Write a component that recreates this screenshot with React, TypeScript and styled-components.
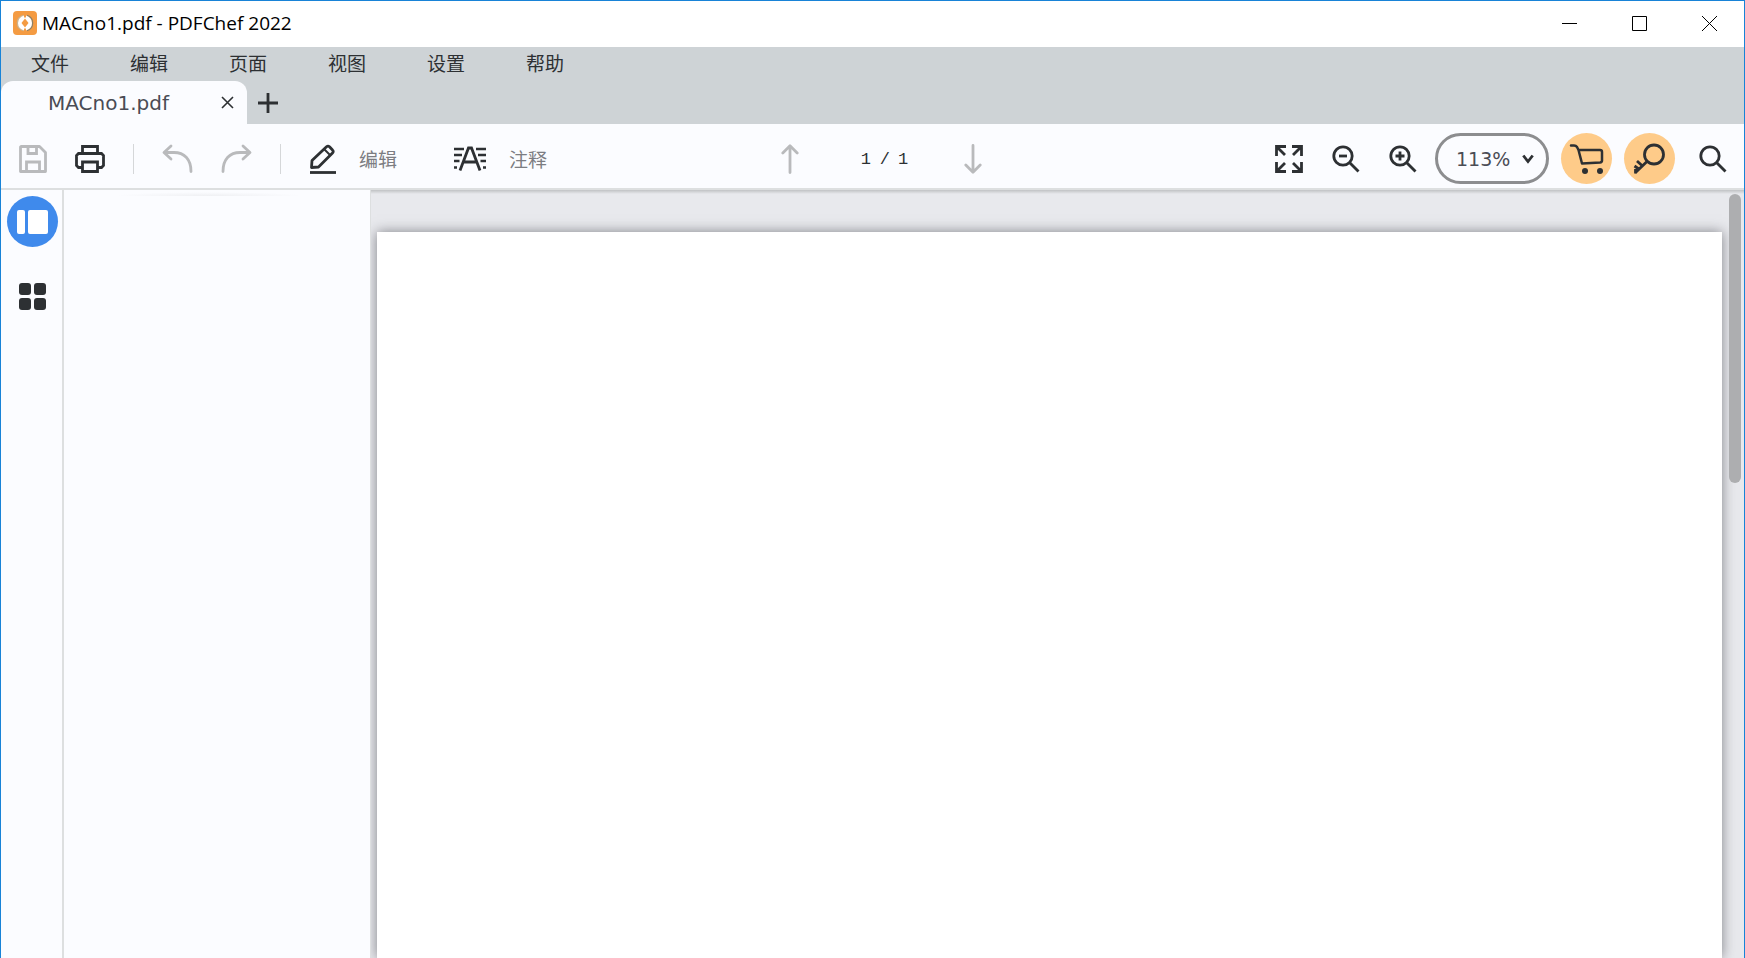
import React from "react";
import styled, { createGlobalStyle } from "styled-components";

const colors = {
  frame: "#1883d7",
  chrome: "#ced3d6",
  surface: "#fbfcff",
  canvas: "#e8e9ed",
  ink: "#2d3033",
  muted: "#b9babc",
  line: "#dddfe0",
};

const cjk = `"Noto Sans CJK SC", sans-serif`;

const GlobalStyle = createGlobalStyle`
  *, *::before, *::after { box-sizing: border-box; }
  body { margin: 0; background: #ffffff; }
  button, input, select { font: inherit; color: inherit; }
`;

const AppWindow = styled.div`
  display: flex;
  flex-direction: column;
  height: 100vh;
  border: 1px solid ${colors.frame};
  border-bottom: 0;
  overflow: hidden;
  font-family: "DejaVu Sans", ${cjk};
  font-size: 19px;
  color: ${colors.ink};
`;

const PlainButton = styled.button`
  display: flex;
  align-items: center;
  justify-content: center;
  flex: none;
  margin: 0;
  padding: 0;
  border: 0;
  background: none;
  cursor: pointer;
`;

/* Title bar */

const TitleBar = styled.header`
  display: flex;
  align-items: center;
  flex: none;
  height: 46px;
  padding: 0 0 2px 12px;
  background: #ffffff;
`;

const Title = styled.h1`
  flex: 1;
  margin: 0 0 0 5px;
  font: 400 19px/24px "Open Sans", ${cjk};
  color: #000000;
`;

const WindowButton = styled(PlainButton)`
  width: 70px;
  height: 44px;
  color: #000000;
`;

/* Menu and tabs */

const Chrome = styled.div`
  flex: none;
  background: ${colors.chrome};
`;

const MenuBar = styled.nav`
  display: flex;
  gap: 61px;
  height: 34px;
  padding: 0 0 2px 30px;
`;

const MenuItem = styled(PlainButton)`
  font: 400 19px/24px ${cjk};
`;

const TabStrip = styled.div`
  display: flex;
  height: 43px;
`;

const Tab = styled.div`
  display: flex;
  align-items: center;
  justify-content: space-between;
  width: 246px;
  padding: 0 10px 0 47px;
  border-radius: 12px 12px 0 0;
  background: ${colors.surface};
`;

const TabLabel = styled(PlainButton)`
  font-size: 20px;
  line-height: 24px;
  color: #4a4c55;
`;

const SmallButton = styled(PlainButton)`
  width: 20px;
  height: 43px;
`;

const AddTabButton = styled(SmallButton)`
  margin-left: 11px;
`;

/* Toolbar */

const Toolbar = styled.div`
  display: grid;
  grid-template-columns: 1fr auto 1fr;
  align-items: center;
  flex: none;
  padding: 9px 0 4px 18px;
  border-bottom: 2px solid ${colors.line};
  background: ${colors.surface};
`;

const Group = styled.div<{ $gap?: number }>`
  display: flex;
  align-items: center;
  gap: ${({ $gap = 0 }) => $gap}px;
`;

const ActionGroup = styled(Group)`
  justify-content: flex-end;
  padding-right: 17px;
`;

const IconButton = styled(PlainButton)<{ $muted?: boolean }>`
  height: 30px;
  color: ${({ $muted }) => ($muted ? colors.muted : colors.ink)};
`;

const SearchButton = styled(IconButton)`
  margin-left: 12px;
`;

const ToolButton = styled(PlainButton)`
  gap: 22px;
  font: 400 19px/24px ${cjk};
  color: ${colors.ink};

  & + & {
    margin-left: 28px;
  }
`;

const ToolLabel = styled.span`
  color: #7c7d82;
`;

const Divider = styled.span`
  width: 1px;
  height: 30px;
  background: #d5d7d9;
`;

const PageCounter = styled.div`
  display: flex;
  align-items: center;
  justify-content: center;
  gap: 8px;
  width: 165px;
  padding: 2px 0 0 6px;
  font: 400 17px/24px "Liberation Mono", monospace;
`;

const PageInput = styled.input`
  width: 11px;
  padding: 0;
  border: 0;
  background: none;
  outline: 0;
`;

const ZoomPicker = styled.label`
  position: relative;
  display: flex;
  align-items: center;
  width: 114px;
  height: 51px;
  margin-left: 6px;

  svg {
    position: absolute;
    right: 15px;
    pointer-events: none;
  }
`;

const ZoomSelect = styled.select`
  width: 100%;
  height: 100%;
  padding: 0 0 0 18px;
  border: 3px solid #8c8d8f;
  border-radius: 26px;
  appearance: none;
  background: none;
  color: #4a4c55;
`;

const RoundButton = styled(PlainButton)<{ $color: string }>`
  width: 51px;
  height: 51px;
  border-radius: 50%;
  background: ${({ $color }) => $color};
  color: ${colors.ink};
`;

/* Work area */

const Workspace = styled.div`
  display: flex;
  flex: 1;
  min-height: 0;
`;

const SideRail = styled.aside`
  display: flex;
  flex-direction: column;
  align-items: center;
  gap: 36px;
  flex: none;
  width: 63px;
  padding: 6px 0 0 1px;
  border-right: 2px solid ${colors.line};
  background: ${colors.surface};
`;

const Thumbnails = styled.aside`
  flex: none;
  width: 307px;
  border-right: 1px solid ${colors.line};
  background: ${colors.surface};
`;

const ScrollHint = styled.div`
  width: 190px;
  height: 4px;
  margin: 2px auto 0 50px;
  background: radial-gradient(ellipse at bottom, #eff0f3, ${colors.surface} 70%);
`;

const Canvas = styled.main`
  display: flex;
  flex: 1;
  min-width: 0;
  padding-left: 6px;
  background: linear-gradient(#c0c2c4, ${colors.canvas} 4px);
  overflow: hidden;
`;

const Page = styled.article`
  flex: 1;
  margin-top: 42px;
  background: #ffffff;
  box-shadow: 0 0 12px rgba(60, 62, 68, 0.6);
`;

const ScrollTrack = styled.div`
  flex: none;
  width: 22px;
  padding: 4px 3px 4px 7px;
`;

const ScrollThumb = styled.div`
  position: relative;
  height: 38%;
  border-radius: 6px;
  background: #adaeb0;
`;

type IconProps = {
  w: number;
  h: number;
  stroke?: number;
  round?: boolean;
  children: React.ReactNode;
};

const Icon = ({ w, h, stroke = 2.8, round, children }: IconProps) => (
  <svg
    width={w}
    height={h}
    viewBox={`0 0 ${w} ${h}`}
    fill="none"
    stroke="currentColor"
    strokeWidth={stroke}
    strokeLinecap={round ? "round" : "butt"}
    strokeLinejoin={round ? "round" : "miter"}
    aria-hidden="true"
  >
    {children}
  </svg>
);

const Logo = () => (
  <svg width="24" height="24" viewBox="0 0 24 24" aria-hidden="true">
    <rect width="24" height="24" rx="4" fill="#f49b42" />
    <path d="M10.500 4.500Q4.500 6 4.500 12T10.500 19.500" fill="none" stroke="#c9b391" strokeWidth="1.500" />
    <path d="M14 4.500Q19.500 6 19.500 12T14 19.500" fill="none" stroke="#8d8067" strokeWidth="1.500" />
    <path d="M11 4.500Q5 6.500 5 12T11 19.500L14 17 9.500 12 14 7Z" fill="#fff" />
    <path d="M13 4.500Q19 6.500 19 12T13 19.500L10 17 14.500 12 10 7Z" fill="#fff" />
    <path d="M12 7.500 15.500 12 12 16.500 8.500 12Z" fill="#f49b42" />
    <path d="M12 3V6.500M12 17.500V21" stroke="#f49b42" strokeWidth="2" />
  </svg>
);

const Magnifier = ({ children }: { children?: React.ReactNode }) => (
  <Icon w={28} h={28}>
    <circle cx="11" cy="11" r="9.200" />
    <path d="M17.500 17.500 26.500 26.500" />
    {children}
  </Icon>
);

const menus = ["文件", "编辑", "页面", "视图", "设置", "帮助"];

export default function App() {
  return (
    <>
      <GlobalStyle />
      <AppWindow>
        <TitleBar>
          <Logo />
          <Title>MACno1.pdf - PDFChef 2022</Title>
          <WindowButton aria-label="最小化">
            <Icon w={15} h={15} stroke={1}><path d="M0 7.500H15" /></Icon>
          </WindowButton>
          <WindowButton aria-label="最大化">
            <Icon w={15} h={15} stroke={1}><path d="M.5.5H14.500V14.500H.5Z" /></Icon>
          </WindowButton>
          <WindowButton aria-label="关闭">
            <Icon w={15} h={15} stroke={1}><path d="M0 0 15 15M15 0 0 15" /></Icon>
          </WindowButton>
        </TitleBar>

        <Chrome>
          <MenuBar>
            {menus.map((name) => (
              <MenuItem key={name}>{name}</MenuItem>
            ))}
          </MenuBar>
          <TabStrip>
            <Tab>
              <TabLabel>MACno1.pdf</TabLabel>
              <SmallButton aria-label="关闭标签页">
                <Icon w={13} h={13} stroke={1.6}><path d="M1 1 12 12M12 1 1 12" /></Icon>
              </SmallButton>
            </Tab>
            <AddTabButton aria-label="新建标签页">
              <Icon w={20} h={20}><path d="M0 10H20M10 0V20" /></Icon>
            </AddTabButton>
          </TabStrip>
        </Chrome>

        <Toolbar>
          <Group $gap={28}>
            <IconButton $muted aria-label="保存">
              <Icon w={28} h={28}>
                <path d="M2 1.500H20.500L26.500 7.500V26.500H1.500V2Z" strokeLinejoin="round" />
                <path d="M9 2V8.500H17.500V2M7.500 26V17H20.500V26" />
              </Icon>
            </IconButton>
            <IconButton aria-label="打印">
              <Icon w={30} h={28}>
                <path d="M7.500 8V1.500H22.500V8" />
                <path d="M7 22.500H3.500L1.500 20.500V10.500L3.500 8.500H26.500L28.500 10.500V20.500L26.500 22.500H23" />
                <path d="M7.500 17H22.500V26.500H7.500Z" />
              </Icon>
            </IconButton>
            <Divider />
            <IconButton $muted aria-label="撤销">
              <Icon w={31} h={29} round>
                <path d="M9 2 2 8.500 9 15M2.500 8.500H12C22 8.500 29 15 29 27.500" />
              </Icon>
            </IconButton>
            <IconButton $muted aria-label="重做">
              <Icon w={31} h={29} round>
                <path d="M22 2 29 8.500 22 15M28.500 8.500H19C9 8.500 2 15 2 27.500" />
              </Icon>
            </IconButton>
            <Divider />
            <ToolButton>
              <Icon w={28} h={30}>
                <path d="M2.500 23.500 3 16.500 17.500 2.800Q19 1.500 20.500 2.800L23.500 6Q25 7.500 23.500 9L9.500 23Z" strokeLinejoin="round" />
                <path d="M15.500 5.500 21 11" strokeWidth="2" />
                <path d="M1 28.500H27" />
              </Icon>
              <ToolLabel>编辑</ToolLabel>
            </ToolButton>
            <ToolButton>
              <Icon w={34} h={26}>
                <path d="M7 24.500 15.500 2H18.500L27 24.500M10.500 16H23.500" />
                <path d="M1 3H11M1 9H9M1 15H6.500M23 3H33M25 9H33M27.500 15H33" strokeWidth="2.500" />
                <path d="M1 21.500H4M30 21.500H33" strokeWidth="2.500" />
              </Icon>
              <ToolLabel>注释</ToolLabel>
            </ToolButton>
          </Group>

          <Group>
            <IconButton $muted aria-label="上一页">
              <Icon w={18} h={30} round><path d="M9 28.500V2M1.800 9 9 1.800 16.200 9" /></Icon>
            </IconButton>
            <PageCounter>
              <PageInput aria-label="页码" defaultValue="1" />
              <span>/</span>
              <span>1</span>
            </PageCounter>
            <IconButton $muted aria-label="下一页">
              <Icon w={18} h={30} round><path d="M9 1.500V28M1.800 21 9 28.200 16.200 21" /></Icon>
            </IconButton>
          </Group>

          <ActionGroup $gap={12}>
            <Group $gap={29}>
              <IconButton aria-label="全屏">
                <Icon w={28} h={28}>
                  <path d="M1.500 11V1.500H11M2 2 10 10M17 1.500H26.500V11M26 2 18 10M1.500 17V26.500H11M2 26 10 18M17 26.500H26.500V17M26 26 18 18" />
                </Icon>
              </IconButton>
              <IconButton aria-label="缩小">
                <Magnifier><path d="M7 11H15" /></Magnifier>
              </IconButton>
              <IconButton aria-label="放大">
                <Magnifier><path d="M6.500 11H15.500M11 6.500V15.500" /></Magnifier>
              </IconButton>
            </Group>
            <ZoomPicker>
              <ZoomSelect aria-label="缩放比例" defaultValue="113%">
                <option>113%</option>
              </ZoomSelect>
              <Icon w={12} h={10}><path d="M1.300 1.500 6 7.500 10.700 1.500" /></Icon>
            </ZoomPicker>
            <RoundButton $color="#fecb89" aria-label="购买">
              <Icon w={51} h={51} stroke={2.5} round>
                <path d="M10 12.500H13Q15 12.500 16 14L17.500 17L21 30.500 39 29.500Q41 29.300 41 27.500V19Q41 17 39 17H18" />
                <circle cx="24" cy="38" r="3" fill="currentColor" stroke="none" />
                <circle cx="39" cy="38" r="3" fill="currentColor" stroke="none" />
              </Icon>
            </RoundButton>
            <RoundButton $color="#fecb89" aria-label="激活">
              <Icon w={51} h={51}>
                <circle cx="30" cy="21.500" r="9.500" />
                <path d="M23 28.500 11 40M18.500 33 13 28M15.500 36.500 10.500 33M11.500 36V40.500" />
              </Icon>
            </RoundButton>
            <SearchButton aria-label="搜索"><Magnifier /></SearchButton>
          </ActionGroup>
        </Toolbar>

        <Workspace>
          <SideRail>
            <RoundButton $color="#3f8aec" aria-label="缩略图">
              <svg width="31" height="24" viewBox="0 0 31 24" fill="#fff" aria-hidden="true">
                <rect width="8" height="24" rx="2" />
                <rect x="11" width="20" height="24" rx="2" />
              </svg>
            </RoundButton>
            <PlainButton aria-label="页面">
              <svg width="27" height="27" viewBox="0 0 27 27" fill={colors.ink} aria-hidden="true">
                <rect width="12" height="12" rx="3" />
                <rect x="15" width="12" height="12" rx="3" />
                <rect y="15" width="12" height="12" rx="3" />
                <rect x="15" y="15" width="12" height="12" rx="3" />
              </svg>
            </PlainButton>
          </SideRail>
          <Thumbnails>
            <ScrollHint />
          </Thumbnails>
          <Canvas>
            <Page />
            <ScrollTrack>
              <ScrollThumb />
            </ScrollTrack>
          </Canvas>
        </Workspace>
      </AppWindow>
    </>
  );
}
